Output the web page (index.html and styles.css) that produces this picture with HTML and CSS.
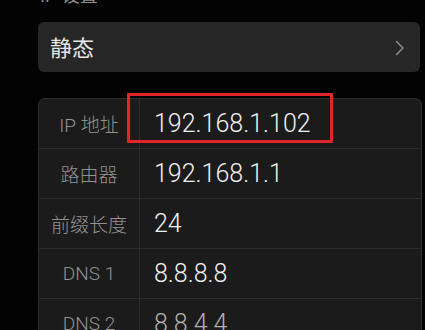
FILE: index.html
```html
<!DOCTYPE html>
<html lang="zh">
<head>
<meta charset="utf-8">
<link rel="stylesheet" href="styles.css">
</head>
<body>
<div class="page">
  <div class="section-title">IP 设置</div>
  <div class="select-card">
    <span class="select-text">静态</span>
    <svg class="chevron" width="10" height="16" viewBox="0 0 10 16"><path d="M1.5 1.5 L8 8 L1.5 14.5" fill="none" stroke="#8a8a8a" stroke-width="1.6" stroke-linecap="round" stroke-linejoin="round"/></svg>
  </div>
  <div class="table">
    <div class="row">
      <div class="label">IP 地址</div>
      <div class="value">192.168.1.102</div>
      <div class="highlight"></div>
    </div>
    <div class="row">
      <div class="label">路由器</div>
      <div class="value">192.168.1.1</div>
    </div>
    <div class="row">
      <div class="label">前缀长度</div>
      <div class="value">24</div>
    </div>
    <div class="row">
      <div class="label">DNS 1</div>
      <div class="value">8.8.8.8</div>
    </div>
    <div class="row">
      <div class="label">DNS 2</div>
      <div class="value dim">8.8.4.4</div>
    </div>
  </div>
</div>
</body>
</html>
```

FILE: styles.css
```css
* { box-sizing: border-box; }
html, body { margin: 0; padding: 0; }
body {
  background: #030303;
  width: 425px;
  height: 330px;
  overflow: hidden;
  font-family: "Liberation Sans", "Noto Sans CJK SC", sans-serif;
}
.page {
  padding-left: 38px;
  padding-right: 3px;
}
.section-title {
  margin-top: -16px;
  height: 24px;
  line-height: 24px;
  font-size: 18px;
  color: #8c8c8c;
  padding-left: 2px;
}
.select-card {
  margin-top: 14px;
  height: 50px;
  margin-right: 2px;
  background: #262626;
  border-radius: 6px;
  display: flex;
  align-items: center;
  justify-content: space-between;
  padding: 0 15px 0 12px;
}
.select-text {
  font-family: "Noto Sans CJK SC", sans-serif;
  font-size: 22px;
  color: #e6e6e6;
  line-height: 1;
  margin-top: -2px;
}
.chevron { display: block; margin-top: 1px; }
.table {
  margin-top: 26px;
  background: #1b1b1b;
  border: 1px solid #2c2c2c;
  border-bottom: none;
  border-radius: 7px 7px 0 0;
}
.row {
  position: relative;
  display: grid;
  grid-template-columns: 101px 1fr;
  height: 50px;
  border-bottom: 1px solid #2c2c2c;
}
.label {
  border-right: 1px solid #2c2c2c;
  display: flex;
  align-items: center;
  justify-content: center;
  font-family: "Roboto", "Noto Sans CJK SC", sans-serif;
  font-weight: 300;
  font-size: 19px;
  color: #929292;
  padding-bottom: 1px;
}
.value {
  display: flex;
  align-items: center;
  padding-left: 14px;
  font-family: "Roboto", sans-serif;
  font-weight: 300;
  font-size: 25px;
  color: #f0f0f0;
  padding-bottom: 1px;
}
.value.dim { color: #b0b0b0; }
.highlight {
  position: absolute;
  left: 88px;
  top: -6px;
  width: 206px;
  height: 50px;
  border: 3px solid #e1252b;
  border-radius: 1px;
}
```
